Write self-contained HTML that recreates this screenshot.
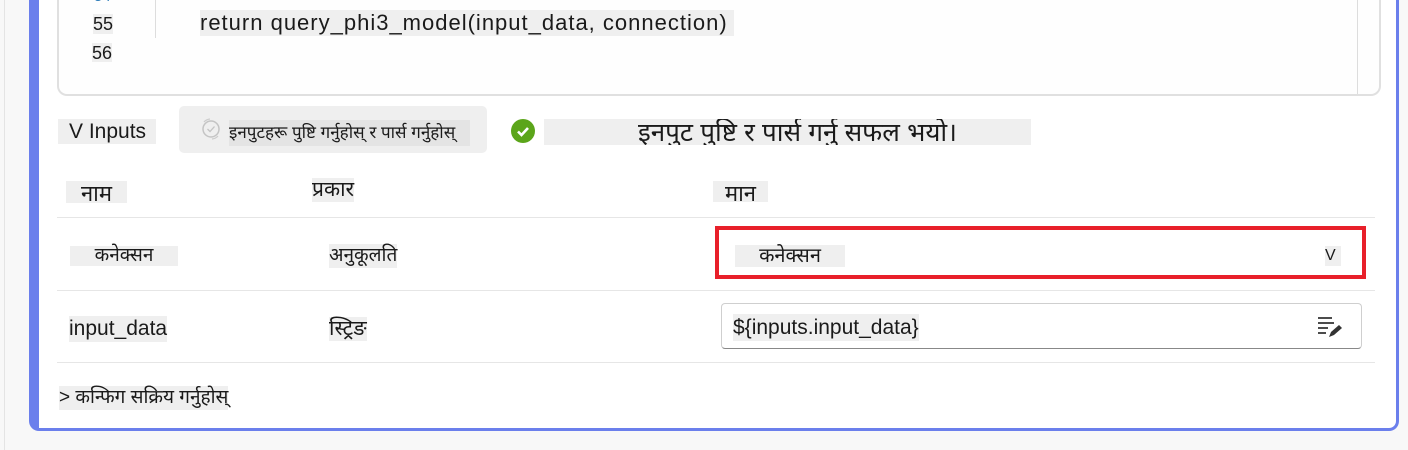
<!DOCTYPE html>
<html><head><meta charset="utf-8"><style>
body{margin:0;width:1408px;height:450px;background:#f8f8f8;position:relative;overflow:hidden;font-family:"Liberation Sans","Noto Sans Devanagari","Lohit Devanagari",sans-serif;color:#1a1a1a}
.a{position:absolute}
.hl{background:#efefef;position:absolute;white-space:nowrap}
.line{position:absolute;height:1px;background:#e6e6e6;left:57px;width:1318px}
</style></head><body>
<div class="a" style="left:4px;top:0;width:1px;height:450px;background:#e4e4e4"></div>
<div class="a" style="left:29px;top:-20px;width:1357px;height:448px;background:#fff;border-left:10px solid #6b7fec;border-right:3px solid #6b7fec;border-bottom:3px solid #6b7fec;border-radius:0 0 10px 10px"></div>
<div class="a" style="left:57px;top:-20px;width:1320px;height:114px;border:2px solid #e0e0e0;border-top:none;border-radius:0 0 10px 10px;background:#fefefe"></div>
<div class="a" style="left:155px;top:0;width:1px;height:38px;background:#ddd"></div>
<div class="a" style="left:1357px;top:0;width:1px;height:94px;background:#ddd"></div>
<div class="a" style="left:94px;top:-12px;font-size:15px;color:#2a7ab8">54</div>
<div class="hl" style="left:93px;top:14px;height:20px;font-size:18px;line-height:20px">55</div>
<div class="hl" style="left:92px;top:43px;height:19px;font-size:18px;line-height:20px">56</div>
<div class="hl" style="top:10px;height:26px;font-size:22px;line-height:26px;left:200px;padding-right:6px;letter-spacing:1px"> return query_phi3_model(input_data, connection)</div>

<div class="hl" style="left:58px;top:119px;height:25px;font-size:21px;line-height:25px;padding:0 10px 0 11px">V Inputs</div>
<div class="a" style="left:179px;top:106px;width:308px;height:47px;background:#efefef;border-radius:5px"></div>
<svg class="a" style="left:200px;top:116px" width="22" height="26"><circle cx="11" cy="13" r="8" stroke="#c4c4c4" stroke-width="1.5" fill="none"/><path d="M7.5 13l2.5 2.5 4.5-5" stroke="#c4c4c4" stroke-width="1.3" fill="none"/><path d="M4 6a9 9 0 0 1 6-3M18 20a9 9 0 0 1-6 3" stroke="#ccc" stroke-width="1.3" fill="none"/></svg>
<div class="hl" style="left:229px;top:120px;width:241px;height:26px;font-size:17px;line-height:26px;background:#e4e4e4;overflow:hidden">इनपुटहरू पुष्टि गर्नुहोस् र पार्स गर्नुहोस्</div>
<div class="a" style="left:511px;top:119px;width:24px;height:24px;border-radius:50%;background:#5ba51a"></div>
<svg class="a" style="left:511px;top:119px" width="24" height="24"><path d="M7 12.5l3.5 3.5 6.5-7" stroke="#fff" stroke-width="2.6" fill="none"/></svg>
<div class="hl" style="left:544px;top:119px;width:487px;height:26px;font-size:26px;line-height:26px;text-align:center;overflow:hidden;padding-left:20px;box-sizing:border-box">इनपुट पुष्टि र पार्स गर्नु सफल भयो।</div>

<div class="hl" style="left:66px;top:181px;width:61px;height:22px;font-size:22px;line-height:26px;text-align:center;overflow:hidden">नाम</div>
<div class="hl" style="left:312px;top:178px;height:24px;font-size:21px;line-height:24px">प्रकार</div>
<div class="hl" style="left:713px;top:181px;width:55px;height:21px;font-size:22px;line-height:26px;text-align:center;overflow:hidden">मान</div>
<div class="line" style="top:217px"></div>
<div class="hl" style="left:70px;top:246px;width:108px;height:20px;font-size:19px;line-height:20px;text-align:center">कनेक्सन</div>
<div class="hl" style="left:329px;top:244px;height:24px;font-size:19px;line-height:24px">अनुकूलति</div>
<div class="a" style="left:715px;top:226px;width:651px;height:53px;border:4px solid #e8202a;box-sizing:border-box;background:#fff"></div>
<div class="hl" style="left:735px;top:245px;width:110px;height:22px;font-size:20px;line-height:22px;text-align:center">कनेक्सन</div>
<div class="hl" style="left:1325px;top:246px;width:16px;height:20px;font-size:16px;line-height:20px">V</div>
<div class="line" style="top:290px"></div>
<div class="hl" style="left:69px;top:316px;height:26px;font-size:21px;line-height:26px">input_data</div>
<div class="hl" style="left:329px;top:317px;height:24px;font-size:21px;line-height:24px">स्ट्रिङ</div>
<div class="a" style="left:721px;top:303px;width:641px;height:46px;border:1px solid #cfcfcf;border-bottom-color:#888;border-radius:4px;box-sizing:border-box;background:#fff"></div>
<div class="hl" style="left:733px;top:314px;height:27px;font-size:21px;line-height:27px">${inputs.input_data}</div>
<svg class="a" style="left:1316px;top:316px" width="28" height="24"><path d="M2 2h14M2 7h16M2 12h10M2 17h8" stroke="#333" stroke-width="1.8"/><path d="M13 21l2-5 8-7 3 3-8 7z" fill="#333"/></svg>
<div class="line" style="top:362px"></div>
<div class="hl" style="left:59px;top:386px;height:24px;font-size:19px;line-height:24px">&gt; कन्फिग सक्रिय गर्नुहोस्</div>
</body></html>
